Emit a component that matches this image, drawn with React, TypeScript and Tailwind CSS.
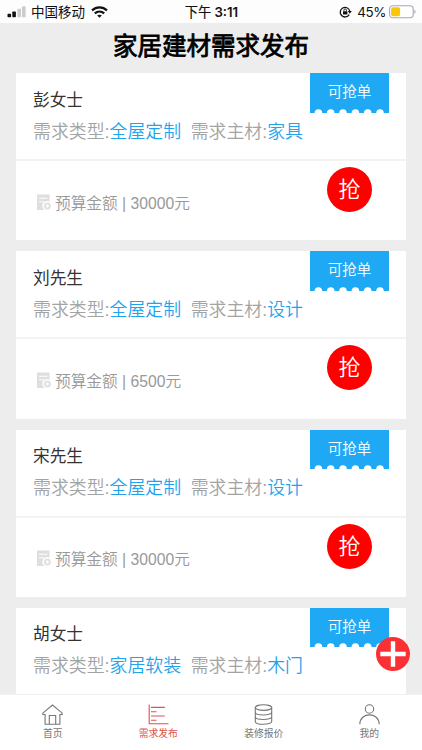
import React from "react";

type Demand = { name: string; type: string; material: string; budget?: string };

const demands: Demand[] = [
  { name: "彭女士", type: "全屋定制", material: "家具", budget: "30000" },
  { name: "刘先生", type: "全屋定制", material: "设计", budget: "6500" },
  { name: "宋先生", type: "全屋定制", material: "设计", budget: "30000" },
  { name: "胡女士", type: "家居软装", material: "木门" },
];

function StatusBar() {
  return (
    <div className="grid h-[23px] shrink-0 grid-cols-3 items-center bg-[#fdfdfd] pl-[7px] pr-[6px] text-[#111]">
      <div className="flex items-center">
        <svg width="20" height="12" viewBox="0 0 20 12">
          <rect x="0.5" y="7.7" width="3.6" height="3.5" rx="0.8" fill="#111" />
          <rect x="5.3" y="5.5" width="3.6" height="5.7" rx="0.8" fill="#111" />
          <rect x="10.4" y="2.8" width="3.6" height="8.4" rx="0.8" fill="#ccc" />
          <rect x="15" y="0.3" width="3.6" height="10.9" rx="0.8" fill="#ccc" />
        </svg>
        <span className="ml-[4px] whitespace-nowrap pt-[2px] text-[13.5px] leading-[22px]">中国移动</span>
        <svg className="ml-[6px]" width="17" height="12" viewBox="0 0 17 12" fill="none" stroke="#111" strokeWidth="2.2">
          <path d="M1 4.4C5.3.3 11.7.3 16 4.4" />
          <path d="M3.8 7.4c2.7-2.5 6.7-2.5 9.4 0" />
          <path d="M8.5 11.8 6.2 9.5c1.3-1.1 3.3-1.1 4.6 0z" fill="#111" stroke="none" />
        </svg>
      </div>
      <div className="flex items-center justify-center whitespace-nowrap leading-[22px]">
        <span className="pt-[2px] text-[13.3px] [-webkit-text-stroke:0.2px_#111]">下午</span>
        <span className="ml-[3px] font-['Inter'] text-[13.2px] font-semibold">3:11</span>
      </div>
      <div className="flex items-center justify-end">
        <svg width="13" height="12" viewBox="0 0 13 12" fill="none" stroke="#111">
          <path d="M10.2 8.6A4.8 4.8 0 1 1 10.7 5" strokeWidth="1.3" />
          <path d="m8.8 5 4 0-2 2.7z" fill="#111" stroke="none" />
          <rect x="4" y="5.2" width="4.4" height="3.4" rx="0.5" fill="#111" stroke="none" />
          <path d="M4.9 5.4V4.3a1.3 1.3 0 0 1 2.6 0v1.1" strokeWidth="0.9" />
        </svg>
        <span className="ml-[5px] font-['Inter'] text-[13.4px] leading-[22px] tracking-[-0.4px]">45%</span>
        <svg className="ml-[3px]" width="27" height="14" viewBox="0 0 27 14">
          <rect x="0.6" y="0.8" width="23.6" height="12" rx="3.2" fill="#fff" stroke="#a9a9a9" strokeWidth="1.1" />
          <rect x="2.1" y="2.3" width="9" height="9" rx="1.8" fill="#fbc60a" />
          <path d="M25.4 4.8c1.6.7 1.6 3.3 0 4z" fill="#a9a9a9" />
        </svg>
      </div>
    </div>
  );
}

function Ribbon() {
  return (
    <div className="flex h-[39.5px] w-[79px] flex-col bg-[#1fa9f5]">
      <span className="h-[35.5px] text-center text-[14.5px] font-[350] leading-[39px] text-white">可抢单</span>
      <svg width="79" height="4" viewBox="0 0 79 4" fill="#fff">
        {[8.4, 20.7, 33, 45.4, 57.7, 70].map((x) => (
          <circle key={x} cx={x} cy="4" r="3.8" />
        ))}
      </svg>
    </div>
  );
}

function BudgetIcon() {
  return (
    <svg width="16" height="17" viewBox="0 0 16 17">
      <path d="M1 .5h12.5v7.2A4.2 4.2 0 0 0 8.6 16H1z" fill="#dedee1" />
      <path d="M3 4.2h8.5M3 7.8h5" stroke="#fff" strokeWidth="1.1" />
      <circle cx="11.4" cy="12" r="3.8" fill="#dedee1" stroke="#fff" strokeWidth="0.7" />
      <ellipse cx="11.4" cy="12" rx="1.4" ry="1.8" fill="#fff" />
    </svg>
  );
}

function DemandCard({ item }: { item: Demand }) {
  return (
    <article className="h-[167.3px] shrink-0 bg-white">
      <div className="flex h-[86px] justify-between pl-[17px] pr-[17px]">
        <div className="-mr-12 pt-[15.5px]">
          <h2 className="text-[16.7px] leading-[24px] text-[#333]">{item.name}</h2>
          <p className="mt-[6px] flex whitespace-nowrap text-[17.9px] font-[350] leading-[26px] text-[#a3a3a3]">
            <span>需求类型:</span>
            <span className="text-[#1fa3ec]">{item.type}</span>
            <span className="ml-[9.5px]">需求主材:</span>
            <span className="text-[#1fa3ec]">{item.material}</span>
          </p>
        </div>
        <Ribbon />
      </div>
      <div className="flex h-[81px] justify-between border-t-2 border-[#f3f3f3] pl-[20px] pr-[34px]">
        {item.budget && (
          <>
            <div className="flex h-[82px] items-center text-[15.7px] font-[350] text-[#999]">
              <BudgetIcon />
              <span className="ml-[3px] whitespace-nowrap pt-[3px] leading-[24px]">预算金额 | {item.budget}元</span>
            </div>
            <button className="mt-[6px] h-[45px] w-[45px] rounded-full bg-[#fe0000] text-center text-[22px] font-[350] leading-[45px] text-white">
              抢
            </button>
          </>
        )}
      </div>
    </article>
  );
}

const tabs = [
  {
    label: "首页",
    icon: <path d="M.8 9.2 10.5 1l9.7 8.2v1.3H17.9v9.8H3.1v-9.8H.8zM7.3 20.3v-8.8h6.4v8.8" />,
  },
  {
    label: "需求发布",
    active: true,
    icon: <path d="M1.2.5v19.2h19.3M3 3.4h13.8M3 7.8h5.5M3 12h13.8M3 16.2h5.5" />,
  },
  {
    label: "装修报价",
    icon: (
      <>
        <ellipse cx="10.5" cy="3.6" rx="8.2" ry="2.8" />
        <path d="M2.3 3.6v13.8c0 3.8 16.4 3.8 16.4 0V3.6M2.3 8.2c0 3.7 16.4 3.7 16.4 0M2.3 12.7c0 3.7 16.4 3.7 16.4 0" />
      </>
    ),
  },
  {
    label: "我的",
    icon: (
      <>
        <circle cx="10.5" cy="5" r="4.2" />
        <path d="M.8 20.3c0-12.6 19.4-12.6 19.4 0" />
      </>
    ),
  },
];

function TabBar() {
  return (
    <nav className="grid h-[56px] shrink-0 grid-cols-4 border-t border-[#f0f0f0] bg-white">
      {tabs.map((tab) => (
        <div
          key={tab.label}
          className={`flex flex-col items-center pt-[9px] ${tab.active ? "text-[#d9534f]" : "text-[#777]"}`}
        >
          <svg width="21" height="21" viewBox="0 0 21 21" fill="none" stroke="currentColor" strokeWidth="1.1">
            {tab.icon}
          </svg>
          <span className="mt-[2px] text-[9.8px] leading-[14px]">{tab.label}</span>
        </div>
      ))}
    </nav>
  );
}

export default function App() {
  return (
    <div className="relative flex h-[750px] w-[422px] flex-col overflow-hidden bg-[#ededed] font-['Liberation_Sans','Noto_Sans_CJK_SC',sans-serif]">
      <StatusBar />
      <h1 className="h-[50px] shrink-0 text-center text-[24.5px] font-normal leading-[48px] text-black [-webkit-text-stroke:0.8px_black]">
        家居建材需求发布
      </h1>
      <main className="flex min-h-0 flex-1 flex-col gap-[11px] overflow-hidden px-[16px]">
        {demands.map((item) => (
          <DemandCard key={item.name} item={item} />
        ))}
      </main>
      <TabBar />
      <button className="absolute left-[376px] top-[637px] h-[34px] w-[34px] rounded-full bg-[#fa3034]" aria-label="+">
        <svg width="34" height="34" viewBox="0 0 34 34" stroke="#fff" strokeWidth="4.4">
          <path d="M4.3 17h25.4M17 4.3v25.4" />
        </svg>
      </button>
    </div>
  );
}
